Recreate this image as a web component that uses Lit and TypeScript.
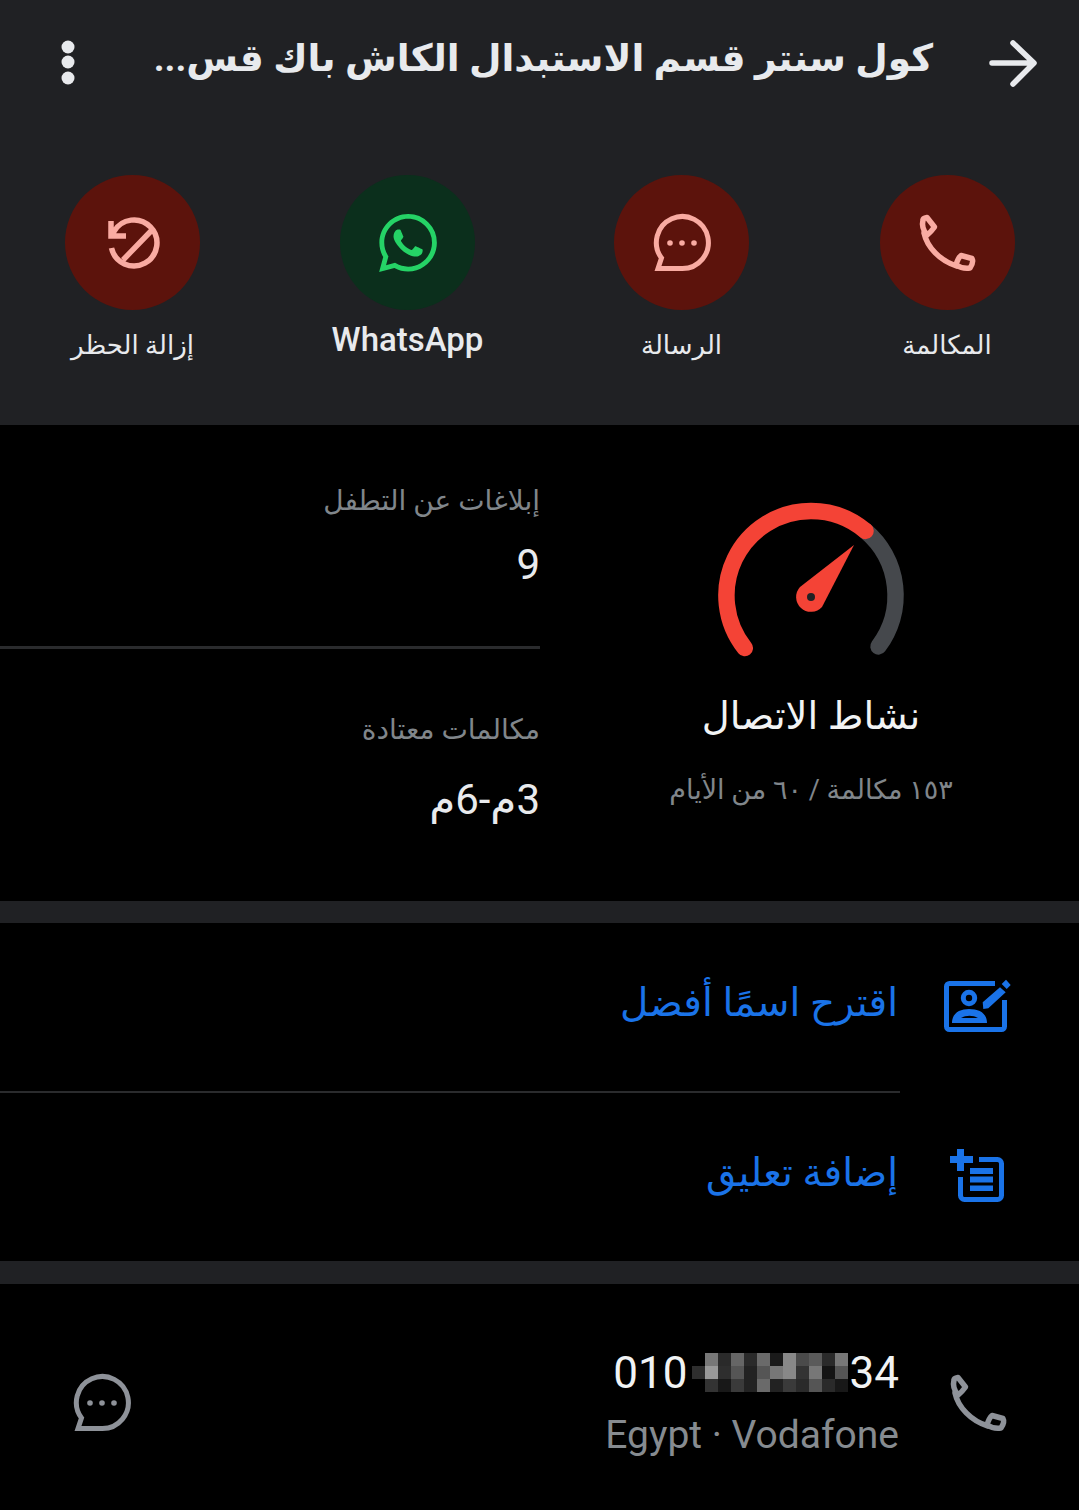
import { LitElement, html, css, svg } from "lit";
import { customElement } from "lit/decorators.js";

const phoneIcon = svg`<g fill="none" stroke="currentColor" stroke-width="5.500" stroke-linejoin="round" stroke-linecap="round">
  <path d="M925 233C928 247 941 261 958 266"/>
  <path d="M924 220Q924 218 928 217.500L935.500 227Q932 232 928 235Q922 228 924 220Z"/>
  <path d="M957 265Q959 258 962 255.500L973 258.500Q975 262 971 268Q963 269 957 265Z"/>
</g>`;
const chatIcon = svg`<path fill="none" stroke="currentColor" stroke-width="5" stroke-linejoin="miter" d="M658 268.500L661.500 258A26 26 0 1 1 682 268.500Z"/><circle cx="670" cy="243" r="2.800" fill="currentColor"/><circle cx="682" cy="243" r="2.800" fill="currentColor"/><circle cx="694" cy="243" r="2.800" fill="currentColor"/>`;

const PIX = [
  ["#000", "#777", "#2a2a2a", "#666", "#2a2a2a", "#6a6a6a", "#1a1a1a", "#888", "#4a4a4a", "#5a5a5a", "#2a2a2a", "#777"],
  ["#2e2e2e", "#999", "#2e2e2e", "#555", "#222", "#555", "#777", "#888", "#333", "#777", "#141414", "#555"],
  ["#000", "#333", "#181818", "#3a3a3a", "#222", "#6a6a6a", "#222", "#3a3a3a", "#2a2a2a", "#555", "#2a2a2a", "#181818"],
];

@customElement("app-root")
export class AppRoot extends LitElement {
  static styles = css`
    :host { display: block; width: 1079px; height: 1510px; overflow: hidden; background: #000; color: #e8eaed; font-family: "Roboto", "DejaVu Sans", sans-serif; }
    .page { direction: rtl; }
    .head { background: #202124; height: 425px; box-sizing: border-box; }
    .bar { height: 125px; display: flex; align-items: center; }
    .back { width: 146px; display: flex; justify-content: flex-start; flex: none; box-sizing: border-box; padding-right: 30px; }
    .title { flex: none; width: 786px; font-size: 37.500px; font-weight: 700; white-space: nowrap; color: #e8eaed; line-height: 50px; margin-top: -10px; }
    .more { flex: 1; display: flex; justify-content: center; padding-right: 11px; }
    .actions { display: grid; grid-template-columns: 264px 267px 281px 267px; margin-top: 50px; }
    .act { display: flex; flex-direction: column; align-items: center; }
    .act:last-child { padding-inline-start: 2px; }
    .circle { width: 135px; height: 135px; border-radius: 50%; background: #5c130c; color: #f9aba2; display: flex; align-items: center; justify-content: center; }
    .circle.green { background: #0b2f1c; }
    .label { font-size: 26px; line-height: 40px; margin-top: 15px; color: #e8eaed; }
    .label.wa { font-size: 33px; font-weight: 500; margin-top: 10px; }
    .stats { height: 476px; display: grid; grid-template-columns: 536px 540px; column-gap: 3px; }
    .gauge { display: flex; flex-direction: column; align-items: center; padding-top: 70px; }
    .g-title { font-size: 38.500px; line-height: 50px; margin-top: 31px; color: #f1f3f4; }
    .g-sub { font-size: 27px; line-height: 40px; margin-top: 29px; color: #80868b; }
    .facts { display: flex; flex-direction: column; }
    .fact { box-sizing: border-box; }
    .fact.one { height: 224px; padding-top: 56px; border-bottom: 3px solid #2a2b2d; }
    .fact.two { padding-top: 61px; }
    .f-key { font-size: 28px; line-height: 40px; color: #80868b; }
    .f-val { font-size: 42px; line-height: 50px; margin-top: 19px; color: #e8eaed; }
    .fact.two .f-val { margin-top: 25px; }
    .band { height: 22px; background: #202124; }
    .band.wide { height: 23px; }
    .row { height: 168px; display: flex; align-items: center; color: #1a73e8; }
    .row-icon { width: 181px; flex: none; display: flex; justify-content: flex-end; padding-left: 40px; box-sizing: border-box; }
    .row-text { font-size: 39px; line-height: 50px; margin-top: -8px; }
    .rule { height: 2px; background: #2a2b2d; width: 900px; margin-inline-start: 179px; }
    .phone { height: 227px; box-sizing: border-box; padding-top: 11px; display: flex; align-items: center; color: #8e9299; }
    .phone-icon { width: 180px; flex: none; display: flex; justify-content: center; }
    .phone-icon svg { margin-left: -23px; }
    .phone-main { flex: 1; direction: ltr; display: flex; flex-direction: column; align-items: flex-end; margin-top: -2px; }
    .num { display: flex; align-items: center; font-size: 44px; line-height: 56px; color: #f1f3f4; }
    .pix { display: grid; grid-template-columns: repeat(12, 13px); grid-auto-rows: 13px; margin: 0 2px 0 4px; }
    .pix span { height: 13px; }
    .carrier { font-size: 39px; line-height: 50px; color: #868b90; margin-top: 9px; }
    .chat-end { width: 204px; flex: none; display: flex; justify-content: center; }
    svg { display: block; }
  `;

  render() {
    return html`<div class="page">
      <div class="head">
        <div class="bar">
          <div class="back">
            <svg width="64" height="64" viewBox="985 31 64 64"><path fill="none" stroke="#e8eaed" stroke-width="5.500" stroke-linecap="round" stroke-linejoin="round" d="M992 63H1032M1013 43L1034 63L1013 84"/></svg>
          </div>
          <div class="title">كول سنتر قسم الاستبدال الكاش باك قس...</div>
          <div class="more">
            <svg width="20" height="48" viewBox="0 0 20 48"><circle cx="10" cy="8" r="6.500" fill="#e8eaed"/><circle cx="10" cy="23" r="6.500" fill="#e8eaed"/><circle cx="10" cy="39" r="6.500" fill="#e8eaed"/></svg>
          </div>
        </div>
        <div class="actions">
          <div class="act">
            <div class="circle"><svg width="64" height="64" viewBox="916 211 64 64">${phoneIcon}</svg></div>
            <div class="label">المكالمة</div>
          </div>
          <div class="act">
            <div class="circle"><svg width="64" height="64" viewBox="650 211 64 64">${chatIcon}</svg></div>
            <div class="label">الرسالة</div>
          </div>
          <div class="act">
            <div class="circle green"><svg width="58" height="58" viewBox="0 0 24 24"><path fill="#25d366" d="M17.472 14.382c-.297-.149-1.758-.867-2.03-.967-.273-.099-.471-.148-.67.15-.197.297-.767.966-.94 1.164-.173.199-.347.223-.644.075-.297-.15-1.255-.463-2.39-1.475-.883-.788-1.48-1.761-1.653-2.059-.173-.297-.018-.458.13-.606.134-.133.298-.347.446-.52.149-.174.198-.298.298-.497.099-.198.05-.371-.025-.52-.075-.149-.669-1.612-.916-2.207-.242-.579-.487-.5-.669-.51-.173-.008-.371-.01-.57-.01-.198 0-.52.074-.792.372-.272.297-1.04 1.016-1.04 2.479 0 1.462 1.065 2.875 1.213 3.074.149.198 2.096 3.2 5.077 4.487.709.306 1.262.489 1.694.625.712.227 1.36.195 1.871.118.571-.085 1.758-.719 2.006-1.413.248-.694.248-1.289.173-1.413-.074-.124-.272-.198-.57-.347m-5.421 7.403h-.004a9.87 9.87 0 01-5.031-1.378l-.361-.214-3.741.982.998-3.648-.235-.374a9.86 9.86 0 01-1.51-5.26c.001-5.45 4.436-9.884 9.888-9.884 2.64 0 5.122 1.03 6.988 2.898a9.825 9.825 0 012.893 6.994c-.003 5.45-4.437 9.884-9.885 9.884m8.413-18.297A11.815 11.815 0 0012.05 0C5.495 0 .16 5.335.157 11.892c0 2.096.547 4.142 1.588 5.945L.057 24l6.305-1.654a11.882 11.882 0 005.683 1.448h.005c6.554 0 11.89-5.335 11.893-11.893a11.821 11.821 0 00-3.48-8.413z"/></svg></div>
            <div class="label wa">WhatsApp</div>
          </div>
          <div class="act">
            <div class="circle"><svg width="64" height="64" viewBox="100 211 64 64"><path fill="none" stroke="currentColor" stroke-width="5.500" stroke-linejoin="miter" d="M110 221V236H125M110 236L113 231.500A23 23 0 1 1 110.500 248M122 260L151 230"/></svg></div>
            <div class="label">إزالة الحظر</div>
          </div>
        </div>
      </div>

      <div class="stats">
        <div class="gauge">
          <svg width="200" height="165" viewBox="711 495 200 165">
            <path fill="none" stroke="#45484c" stroke-width="16.500" stroke-linecap="round" d="M865.500 530.900A84.500 84.500 0 0 1 878.500 646.400"/>
            <path fill="none" stroke="#f44336" stroke-width="16.500" stroke-linecap="round" d="M744.800 648.100A84.500 84.500 0 0 1 811 511A84.500 84.500 0 0 1 865.500 530.900"/>
            <path fill="#f44336" d="M854 545L800 587A14.500 14.500 0 1 0 822 607Z"/>
            <circle cx="811" cy="597" r="4" fill="#202124"/>
          </svg>
          <div class="g-title">نشاط الاتصال</div>
          <div class="g-sub">١٥٣ مكالمة / ٦٠ من الأيام</div>
        </div>
        <div class="facts">
          <div class="fact one">
            <div class="f-key">إبلاغات عن التطفل</div>
            <div class="f-val">9</div>
          </div>
          <div class="fact two">
            <div class="f-key">مكالمات معتادة</div>
            <div class="f-val">3م-6م</div>
          </div>
        </div>
      </div>
      <div class="band"></div>
      <div class="row">
        <div class="row-icon"><svg width="80" height="66" viewBox="938 975 80 66">
          <path fill="none" stroke="currentColor" stroke-width="5" d="M995 984.500H949.500A3 3 0 0 0 946.500 987.500V1027.500A3 3 0 0 0 949.500 1030.500H1001.500A3 3 0 0 0 1004.500 1027.500V1001"/>
          <circle cx="969" cy="999" r="5.700" fill="none" stroke="currentColor" stroke-width="5"/>
          <path fill="currentColor" fill-rule="evenodd" d="M952 1024C952 1014 960 1010 969 1010C979 1010 987 1014 987 1024ZM961 1019C966 1016 973 1016 978 1019Z"/>
          <path fill="currentColor" d="M982.700 1003.300L1000 988.300L1005.700 993.300L988.300 1009.300L983.300 1010ZM1001.700 985L1006 980.700L1010.700 986L1006.700 990Z"/>
        </svg></div>
        <div class="row-text">اقترح اسمًا أفضل</div>
      </div>
      <div class="rule"></div>
      <div class="row">
        <div class="row-icon"><svg width="80" height="66" viewBox="938 1145 80 66">
          <path fill="currentColor" d="M950 1157H957V1150H964V1157H973V1164H964V1172H957V1164H950Z"/>
          <path fill="none" stroke="currentColor" stroke-width="5" d="M979 1160.500H997.500A4 4 0 0 1 1001.500 1164.500V1196.500A4 4 0 0 1 997.500 1200.500H964.500A4 4 0 0 1 960.500 1196.500V1178"/>
          <path fill="currentColor" d="M970 1169H993V1175H970ZM970 1177.500H993V1183.500H970ZM970 1186.500H993V1192H970Z"/>
        </svg></div>
        <div class="row-text">إضافة تعليق</div>
      </div>
      <div class="band wide"></div>
      <div class="phone">
        <div class="phone-icon"><svg width="64" height="64" viewBox="916 211 64 64">${phoneIcon}</svg></div>
        <div class="phone-main">
          <div class="num">010<div class="pix">${PIX.flat().map((c) => html`<span style="background:${c}"></span>`)}</div>34</div>
          <div class="carrier">Egypt · Vodafone</div>
        </div>
        <div class="chat-end"><svg width="64" height="64" viewBox="650 211 64 64">${chatIcon}</svg></div>
      </div>
    </div>`;
  }
}
